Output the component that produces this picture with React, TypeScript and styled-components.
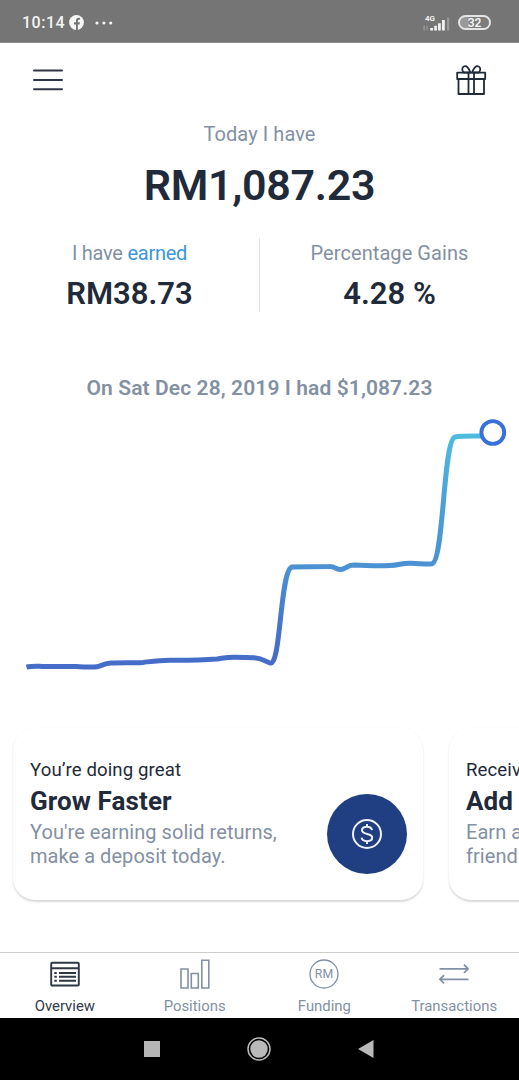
import React from "react";
import styled, { createGlobalStyle } from "styled-components";

const ink = "#1f2a3a";
const muted = "#8390a3";

const GlobalStyle = createGlobalStyle`
  * { box-sizing: border-box; }
  body { margin: 0; background: #fff; font-family: Roboto, "Liberation Sans", sans-serif; }
`;

const Screen = styled.div`
  display: flex;
  flex-direction: column;
  width: 519px;
  height: 1080px;
  overflow: hidden;
  background: #fff;
  color: ${ink};
`;

const StatusBar = styled.div`
  display: flex;
  align-items: center;
  justify-content: space-between;
  flex: none;
  height: 43px;
  padding: 3px 28px 0 22px;
  background: #757575;
  border-bottom: 1px solid #8c8c8c;
  color: #f4f4f4;
`;

const StatusGroup = styled.div<{ $gap: number }>`
  display: flex;
  align-items: center;
  gap: ${(p) => p.$gap}px;
`;

const Clock = styled.span`
  width: 42px;
  font-size: 16px;
  font-weight: 500;
  letter-spacing: 0.5px;
  white-space: nowrap;
`;

const Battery = styled.span`
  display: flex;
  align-items: center;
  justify-content: center;
  width: 33px;
  height: 15px;
  border: 2px solid #e4e4e4;
  border-radius: 8px;
  background: linear-gradient(90deg, #999 32%, #7c7c7c 32%);
  font-size: 12px;
  font-weight: 600;
  line-height: 12px;
`;

const Header = styled.header`
  display: flex;
  justify-content: space-between;
  flex: none;
  height: 75px;
  padding: 21px 32px 0 32px;
`;

const Hero = styled.section`
  display: flex;
  flex-direction: column;
  align-items: center;
  flex: none;
  height: 120px;
  padding-top: 4px;
`;

const Label = styled.span<{ $tight?: boolean }>`
  font-size: 20px;
  line-height: 24px;
  letter-spacing: ${(p) => (p.$tight ? "-0.25px" : "0.08px")};
  color: ${muted};
  white-space: nowrap;
`;

const Earned = styled.span`
  color: #3b97d9;
`;

const Total = styled.h1`
  margin: 13px 0 0;
  font-size: 43px;
  font-weight: 600;
  line-height: 52px;
  letter-spacing: -0.3px;
`;

const Stats = styled.section`
  display: flex;
  flex: none;
  height: 74px;
`;

const Stat = styled.div`
  display: flex;
  flex: 1;
  flex-direction: column;
  align-items: center;
  padding-top: 3px;

  & + & { border-left: 1px solid #dfe3e8; }
`;

const StatValue = styled.strong`
  margin-top: 11px;
  font-size: 31px;
  font-weight: 600;
  line-height: 36px;
  white-space: nowrap;
`;

const ChartSection = styled.section`
  display: flex;
  flex-direction: column;
  align-items: center;
  gap: 10px;
  flex: none;
  height: 408px;
  padding-top: 64px;
`;

const ChartCaption = styled.p`
  margin: 0;
  font-size: 21px;
  font-weight: 600;
  line-height: 24px;
  letter-spacing: 0.1px;
  color: ${muted};
  white-space: nowrap;
`;

const Cards = styled.section`
  display: flex;
  gap: 26px;
  flex: none;
  height: 232px;
  padding: 8px 0 0 13px;
  overflow: hidden;
`;

const Card = styled.article`
  display: flex;
  justify-content: space-between;
  flex: none;
  width: 410px;
  height: 172px;
  padding: 30px 16px 0 17px;
  border-radius: 22px;
  background: #fff;
  box-shadow: 0 1.5px 2px rgba(0, 0, 0, 0.15);
`;

const CardKicker = styled.p`
  margin: 0;
  font-size: 18.6px;
  line-height: 25px;
  letter-spacing: 0.1px;
  white-space: nowrap;
`;

const CardTitle = styled.h2`
  margin: 2px 0 4px;
  font-size: 26px;
  font-weight: 700;
  line-height: 32px;
  letter-spacing: 0.1px;
  white-space: nowrap;
`;

const CardBody = styled.p`
  margin: 0;
  font-size: 20px;
  line-height: 23.5px;
  letter-spacing: 0.05px;
  color: ${muted};
  white-space: nowrap;
`;

const CardBadge = styled.div`
  display: flex;
  align-items: center;
  justify-content: center;
  width: 80px;
  height: 80px;
  margin-top: 36px;
  border-radius: 50%;
  background: #1f3f82;
`;

const TabBar = styled.nav`
  display: flex;
  flex: none;
  height: 66px;
  border-top: 1px solid #cdcdcd;
`;

const Tab = styled.div<{ $active?: boolean }>`
  display: flex;
  flex: 1;
  flex-direction: column;
  align-items: center;
  gap: 8px;
  padding-top: 6px;
  color: ${(p) => (p.$active ? "#333a48" : muted)};
  font-size: 14.9px;
  line-height: 18px;
`;

const SystemBar = styled.footer`
  display: flex;
  flex: 1;
  align-items: center;
  justify-content: center;
  padding-right: 1px;
  background: #000;
`;

const SystemSlot = styled.div`
  display: flex;
  justify-content: center;
  width: 107px;
`;

const FacebookIcon = () => (
  <svg width="15" height="15" viewBox="0 0 15 15">
    <circle cx="7.5" cy="7.5" r="7.4" fill="#f7f7f7" />
    <path d="M7 15V9.5H5V7.2h2V5.6C7 3.7 8 2.8 9.8 2.8h1.1v2H9.8c-.6 0-.9.3-.9.9v1.5h2l-.3 2.3H8.9V15z" fill="#757575" />
  </svg>
);

const MoreDots = () => (
  <svg width="19" height="4" viewBox="0 0 19 4" fill="#f4f4f4">
    <circle cx="2" cy="2" r="1.6" />
    <circle cx="8.900" cy="2" r="1.6" />
    <circle cx="15.700" cy="2" r="1.6" />
  </svg>
);

const SignalIcon = () => (
  <svg width="28" height="18" viewBox="0 0 28 18" fill="#f0f0f0">
    <text x="2" y="6.5" fontSize="8" fontWeight="700" fontFamily="Roboto, sans-serif">4G</text>
    <path d="M.5 11.5h1.2v5H.5zM3.5 11.5h1v5h-1z" opacity=".35" />
    <path d="M7.2 14h2.8v2.6H7.2zM11.2 11.8h2.7v4.8h-2.7zM15 9.200h2.800v7.400H15zM19 6h2.800v10.600H19z" />
    <path d="M24 3.5h2.2v13.1H24z" opacity=".3" />
  </svg>
);

const MenuIcon = () => (
  <svg width="32" height="32" viewBox="0 0 32 32" stroke="#30364a" strokeWidth="2" strokeLinecap="round">
    <path d="M2 6.500h28M2 16h28M2 25.300h28" />
  </svg>
);

const GiftIcon = () => (
  <svg width="32" height="32" viewBox="0 0 32 32" fill="none" stroke={ink} strokeWidth="1.8" strokeLinejoin="round">
    <path d="M2.200 8.700h28v6.300h-28zM3.500 15h25.500v15H3.500zM13.500 8.700V30M19 8.700V30" />
    <path d="M15.500 8.500H8.800C6.800 6.800 6.600 3.600 8.800 2.500c2.800-1.400 5 1.500 6.700 6zM17 8.500h6.700c2-1.700 2.200-4.900 0-6-2.800-1.400-5 1.500-6.700 6z" />
  </svg>
);

const GrowthChart = () => (
  <svg width="519" height="280" viewBox="0 410 519 280" fill="none">
    <defs>
      <linearGradient id="growth" gradientUnits="userSpaceOnUse" x1="0" y1="668" x2="0" y2="434">
        <stop offset="0" stopColor="#456cc8" />
        <stop offset=".16" stopColor="#4673cc" />
        <stop offset=".42" stopColor="#4b91d3" />
        <stop offset=".7" stopColor="#4b9fd6" />
        <stop offset="1" stopColor="#4fbce0" />
      </linearGradient>
    </defs>
    <path
      d="M26.500 667.200C31 666 36 666.300 42 666.400L76 666.500C85 666.700 91 667.800 97 666.700C102 665.800 104 663.300 111 663C123 662.500 133 663 143 662.400C153 661.200 159 660.200 170 660.200C187 660.300 203 660 217 659C224 658 228 656.800 236 657.200L254 657.800C263 658 265 662 270.500 663.100C281 664.500 280 570 292 567L329 566.600C335 566.300 336 569.500 340.500 569.500C346 569.500 346 565.300 354 565.100C367 565.300 377 566.200 390 565.600C400 565 402 562.900 411 563.300C420 564 425 564.400 432 563.800C444 561 443 440 455 437C462 435.800 472 436.300 486 436"
      stroke="url(#growth)"
      strokeWidth="5"
      strokeLinejoin="round"
    />
    <circle cx="492.800" cy="432.500" r="11.400" fill="#fff" stroke="#3871d9" strokeWidth="3.900" />
  </svg>
);

const CoinIcon = () => (
  <svg width="32" height="32" viewBox="0 0 32 32" fill="none" stroke="#eef2fb" strokeWidth="2">
    <circle cx="16" cy="16" r="14" />
    <path d="M21 12.200C20.600 9.900 18.700 8.800 16 8.800c-2.900 0-5 1.300-5 3.500 0 4.900 10.200 2.500 10.200 7.300 0 2.300-2.200 3.600-5.200 3.600-3 0-5-1.200-5.400-3.500M16 6v3M16 23v3" />
  </svg>
);

const OverviewIcon = () => (
  <svg width="30" height="30" viewBox="0 0 30 30" fill="none" stroke="#2f3647" strokeWidth="1.900">
    <rect x="1.200" y="3.700" width="27.600" height="22.800" rx="1" />
    <path d="M1 9.300h28M9 14h17M9 17.800h17M9 21.800h17" />
    <path d="M4.300 14h2.500M4.300 17.800h2.500M4.300 21.800h2.500" />
  </svg>
);

const PositionsIcon = () => (
  <svg width="30" height="30" viewBox="0 0 30 30" fill="none" stroke={muted} strokeWidth="1.600">
    <path d="M1 10h7v19H1zM11.300 14.500h7V29h-7zM21.800 1.200h7V29h-7z" />
  </svg>
);

const FundingIcon = () => (
  <svg width="30" height="30" viewBox="0 0 30 30">
    <circle cx="15" cy="15" r="14" fill="none" stroke={muted} strokeWidth="1.300" />
    <text x="15" y="19.300" textAnchor="middle" fontFamily="Roboto, sans-serif" fontSize="12.300" fill={muted}>RM</text>
  </svg>
);

const TransactionsIcon = () => (
  <svg width="30" height="30" viewBox="0 0 30 30" fill="none" stroke={muted} strokeWidth="1.800">
    <path d="M.500 9.800h28.500M25 5.600 29 9.800 25 14M29.500 20.300H1M5 16.100 1 20.300l4 4.200" />
  </svg>
);

const cards = [
  { kicker: "You’re doing great", title: "Grow Faster", body: ["You're earning solid returns,", "make a deposit today."], icon: <CoinIcon /> },
  { kicker: "Receiv", title: "Add", body: ["Earn a", "friend"] },
];

const tabs = [
  { name: "Overview", icon: <OverviewIcon />, active: true },
  { name: "Positions", icon: <PositionsIcon /> },
  { name: "Funding", icon: <FundingIcon /> },
  { name: "Transactions", icon: <TransactionsIcon /> },
];

export default function App() {
  return (
    <Screen>
      <GlobalStyle />
      <StatusBar>
        <StatusGroup $gap={11}>
          <StatusGroup $gap={5}>
            <Clock>10:14</Clock>
            <FacebookIcon />
          </StatusGroup>
          <MoreDots />
        </StatusGroup>
        <StatusGroup $gap={7}>
          <SignalIcon />
          <Battery>32</Battery>
        </StatusGroup>
      </StatusBar>
      <Header>
        <MenuIcon />
        <GiftIcon />
      </Header>
      <Hero>
        <Label>Today I have</Label>
        <Total>RM1,087.23</Total>
      </Hero>
      <Stats>
        <Stat>
          <Label $tight>I have <Earned>earned</Earned></Label>
          <StatValue>RM38.73</StatValue>
        </Stat>
        <Stat>
          <Label>Percentage Gains</Label>
          <StatValue>4.28 %</StatValue>
        </Stat>
      </Stats>
      <ChartSection>
        <ChartCaption>On Sat Dec 28, 2019 I had $1,087.23</ChartCaption>
        <GrowthChart />
      </ChartSection>
      <Cards>
        {cards.map((card) => (
          <Card key={card.title}>
            <div>
              <CardKicker>{card.kicker}</CardKicker>
              <CardTitle>{card.title}</CardTitle>
              {card.body.map((line) => <CardBody key={line}>{line}</CardBody>)}
            </div>
            {card.icon && <CardBadge>{card.icon}</CardBadge>}
          </Card>
        ))}
      </Cards>
      <TabBar>
        {tabs.map((tab) => (
          <Tab key={tab.name} $active={tab.active}>
            {tab.icon}
            {tab.name}
          </Tab>
        ))}
      </TabBar>
      <SystemBar>
        <SystemSlot>
          <svg width="16" height="16"><rect width="16" height="16" fill="#b5b5b5" /></svg>
        </SystemSlot>
        <SystemSlot>
          <svg width="24" height="24" viewBox="0 0 24 24">
            <circle cx="12" cy="12" r="11" fill="none" stroke="#b9b9b9" strokeWidth="1.500" />
            <circle cx="12" cy="12" r="8.700" fill="#b9b9b9" />
          </svg>
        </SystemSlot>
        <SystemSlot>
          <svg width="17" height="18" viewBox="0 0 17 18"><path d="M0 9 15.500 0v18z" fill="#b9b9b9" /></svg>
        </SystemSlot>
      </SystemBar>
    </Screen>
  );
}
